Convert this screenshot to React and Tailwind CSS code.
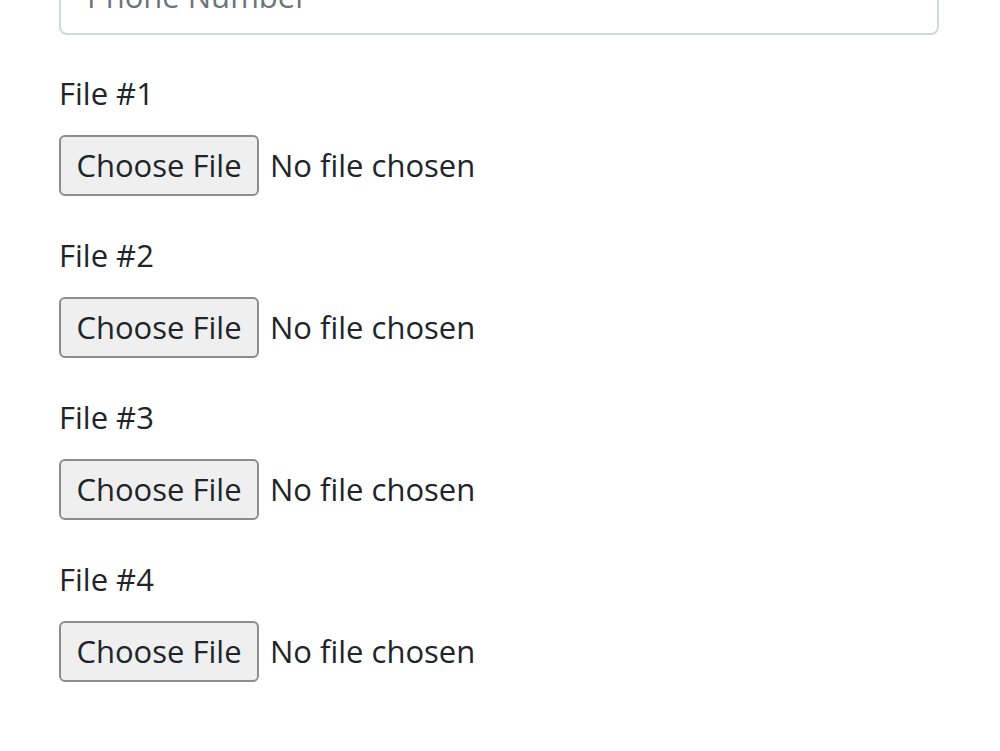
import React from "react";

const files = [1, 2, 3, 4];

const FileField = ({ n }) => (
  <div className="mb-[35px]">
    <label className="block h-[48px] leading-[48px] mb-[18px] text-[31px] text-[#212529]">
      File #{n}
    </label>
    <div className="flex items-center mt-[2px] h-[61px]">
      <button
        type="button"
        className="h-[61px] w-[200px] flex items-center justify-center rounded-[6px] border-2 border-[#8d8d8d] bg-[#efefef] text-[31px] text-[#212529]"
      >
        Choose File
      </button>
      <span className="ml-[11px] text-[31px] text-[#212529]">No file chosen</span>
    </div>
  </div>
);

const App = () => {
  return (
    <div
      className="w-[1000px] h-[751px] overflow-hidden bg-white"
      style={{ fontFamily: '"Open Sans", "Noto Sans", sans-serif' }}
    >
      <div className="px-[59px] -mt-[42px]">
        <div className="w-[880px] h-[77px] rounded-[8px] border-2 border-[#d2d6e0] flex items-center px-[26px] mb-[34px]">
          <span className="text-[31px] text-[#6c757d]">Phone Number</span>
        </div>
        {files.map((n) => (
          <FileField key={n} n={n} />
        ))}
      </div>
    </div>
  );
};

export default App;
